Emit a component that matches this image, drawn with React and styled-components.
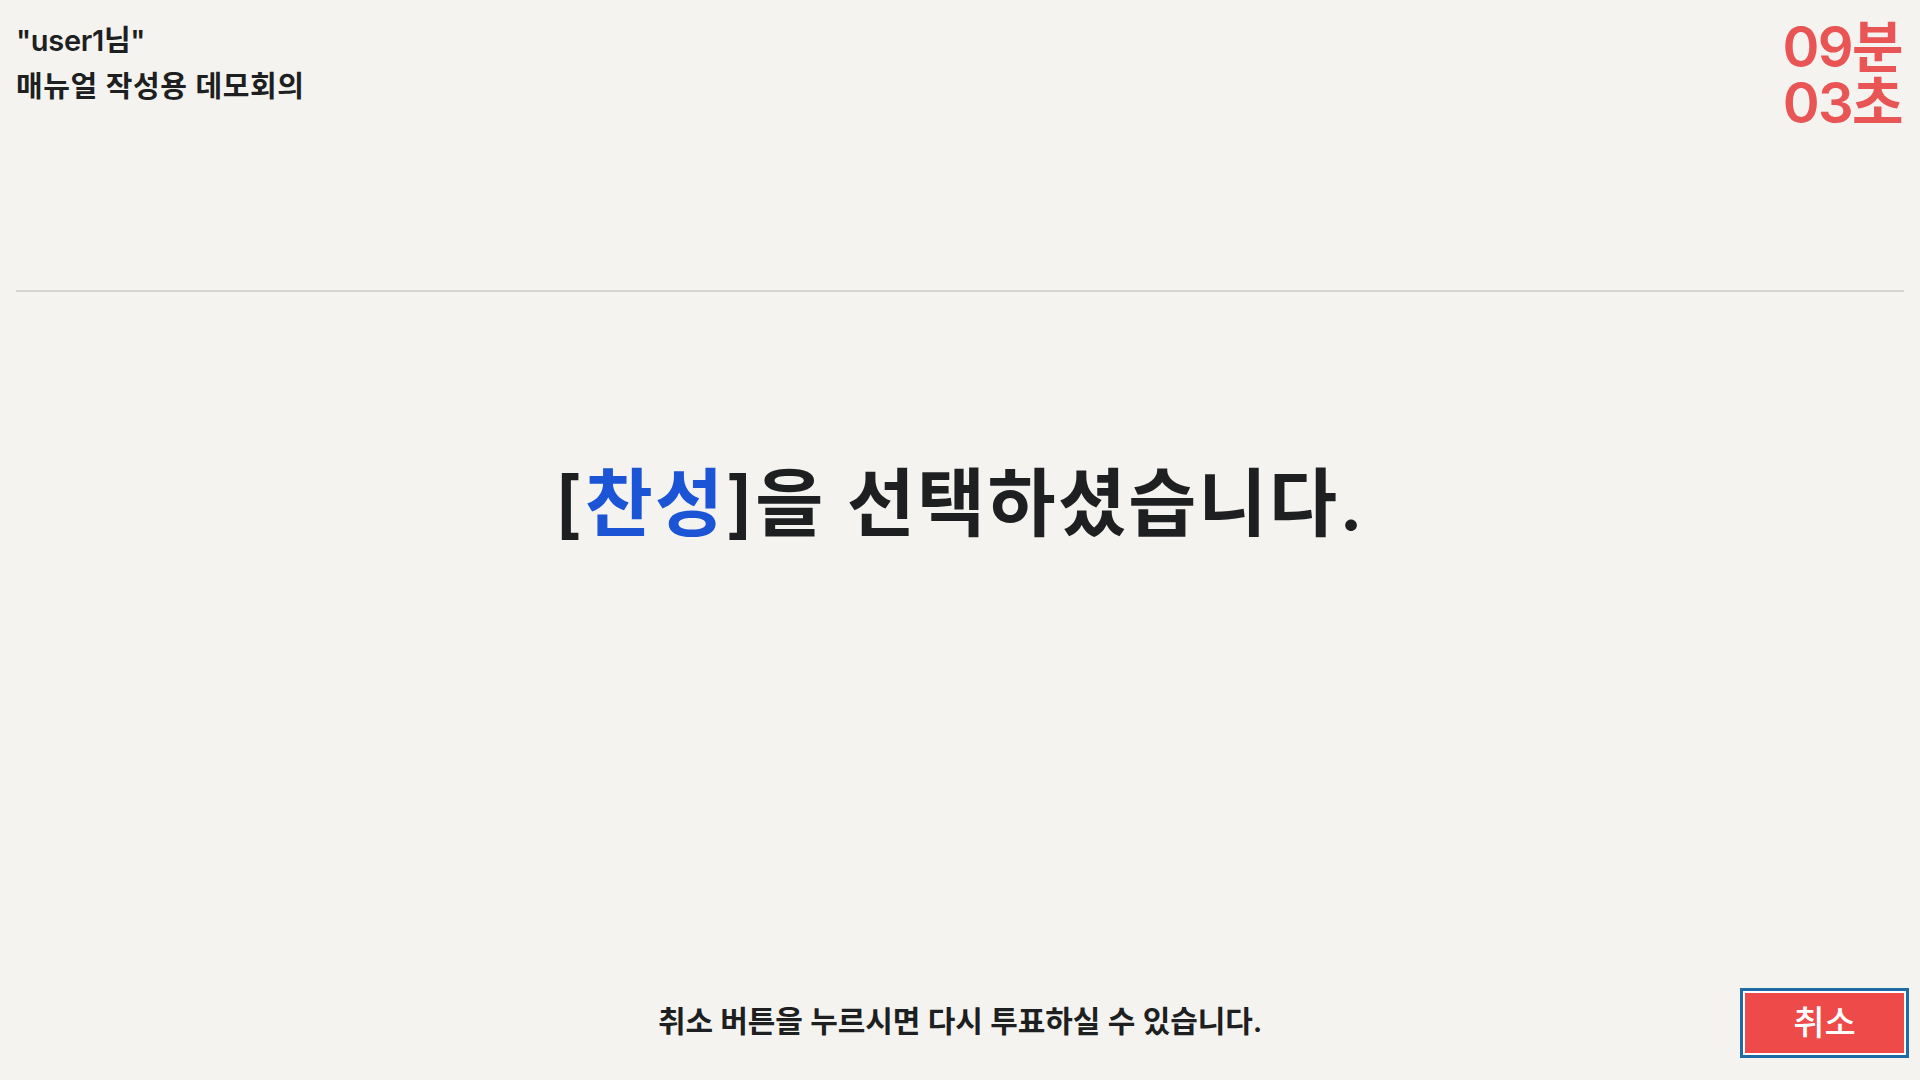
import React from "react";
import styled, { createGlobalStyle } from "styled-components";

const GlobalStyle = createGlobalStyle`
  html, body {
    margin: 0;
    padding: 0;
    background: #f4f3f0;
  }
  body {
    font-family: "Inter", "Noto Sans CJK KR", sans-serif;
    color: #1d1f21;
  }
  * { box-sizing: border-box; }
`;

const Page = styled.div`
  width: 100%;
  height: 100vh;
  display: flex;
  flex-direction: column;
  background: #f4f3f0;
  padding: 0 16px;
`;

const Header = styled.header`
  height: 290px;
  display: flex;
  justify-content: space-between;
  align-items: flex-start;
  padding-top: 18px;
`;

const UserBlock = styled.div`
  display: flex;
  flex-direction: column;
  font-weight: 600;
  color: #1d1f21;
`;

const UserName = styled.div`
  font-size: 29px;
  line-height: 46px;
  letter-spacing: -0.3px;
`;

const MeetingTitle = styled.div`
  font-size: 29px;
  line-height: 46px;
  letter-spacing: 0.6px;
`;

const Timer = styled.div`
  display: flex;
  flex-direction: column;
  align-items: flex-end;
  color: #e95555;
  font-weight: 600;
  font-size: 56px;
  line-height: 56px;
  letter-spacing: -1.6px;
  padding-top: 1px;
  padding-right: 2px;
`;

const Divider = styled.hr`
  margin: 0;
  border: none;
  height: 2px;
  background: #d5d4d1;
`;

const Main = styled.main`
  flex: 1;
  display: flex;
  justify-content: center;
  align-items: flex-start;
  padding-top: 161px;
`;

const Result = styled.h1`
  margin: 0;
  font-size: 74px;
  line-height: 100px;
  font-weight: 600;
  letter-spacing: 2.3px;
  color: #1d1f21;
`;

const Choice = styled.span`
  color: #1c54d6;
`;

const Footer = styled.footer`
  display: grid;
  grid-template-columns: 1fr auto 1fr;
  align-items: center;
  padding-bottom: 25px;
`;

const Notice = styled.p`
  grid-column: 2;
  margin: 0;
  font-size: 30px;
  font-weight: 600;
  letter-spacing: -0.1px;
  color: #1d1f21;
  line-height: 40px;
  transform: translateY(-2px);
`;

const CancelButton = styled.button`
  grid-column: 3;
  justify-self: end;
  margin-right: -2px;
  width: 163px;
  height: 64px;
  border: 2px solid #ffffff;
  box-shadow: 0 0 0 3px #1e6ba6;
  background: #ee4a4a;
  color: #ffffff;
  font-family: "Noto Sans CJK KR", sans-serif;
  font-size: 34px;
  font-weight: 500;
  line-height: 1;
  cursor: pointer;
  padding: 0 0 4px;
`;

export default function App() {
  return (
    <>
      <GlobalStyle />
      <Page>
        <Header>
          <UserBlock>
            <UserName>"user1님"</UserName>
            <MeetingTitle>매뉴얼 작성용 데모회의</MeetingTitle>
          </UserBlock>
          <Timer>
            <span>09분</span>
            <span>03초</span>
          </Timer>
        </Header>
        <Divider />
        <Main>
          <Result>
            [<Choice>찬성</Choice>]을 선택하셨습니다.
          </Result>
        </Main>
        <Footer>
          <Notice>취소 버튼을 누르시면 다시 투표하실 수 있습니다.</Notice>
          <CancelButton>취소</CancelButton>
        </Footer>
      </Page>
    </>
  );
}
